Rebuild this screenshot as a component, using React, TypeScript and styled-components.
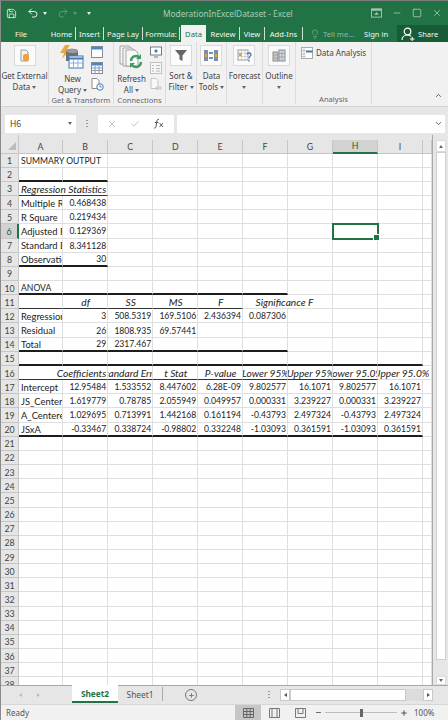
import styled, { createGlobalStyle } from "styled-components"
import { ChevronDown, ChevronUp, Lightbulb, Minus, Plus, Redo2, Save, Square, Undo2, X, Check } from "lucide-react"
import { Fragment } from "react"

type Content = { text: string, align?: "left" | "right" | "center", italic?: boolean, span?: number, shift?: number }

const colNames = ["A", "B", "C", "D", "E", "F", "G", "H", "I", ""]
const colWidths = [44, 45.3, 45, 45, 44.7, 45, 45, 45, 45, 9]

const num = (text: string): Content => ({ text, align: "right" })
const head = (text: string, extra?: Partial<Content>): Content => ({ text, align: "center", italic: true, ...extra })
const line = (...values: string[]) => values.map((v, i) => (i === 0 ? { text: v } : num(v)))

const sheet: Record<number, (Content | null)[]> = {
    1: [{ text: "SUMMARY OUTPUT", span: 2 }],
    3: [head("Regression Statistics", { span: 2 })],
    4: line("Multiple R", "0.468438"),
    5: line("R Square", "0.219434"),
    6: line("Adjusted R Square", "0.129369"),
    7: line("Standard Error", "8.341128"),
    8: line("Observations", "30"),
    10: [{ text: "ANOVA" }],
    11: [null, head("df"), head("SS"), head("MS"), head("F"), head("Significance F", { span: 2, shift: -7 })],
    12: line("Regression", "3", "508.5319", "169.5106", "2.436394", "0.087306"),
    13: line("Residual", "26", "1808.935", "69.57441"),
    14: line("Total", "29", "2317.467"),
    16: [{ text: "Coefficients", align: "right", italic: true, span: 2 }, null, head("Standard Error"), head("t Stat"), head("P-value"), head("Lower 95%"), head("Upper 95%"), head("Lower 95.0%"), head("Upper 95.0%", { span: 2, shift: -7 })],
    17: line("Intercept", "12.95484", "1.533552", "8.447602", "6.28E-09", "9.802577", "16.1071", "9.802577", "16.1071"),
    18: line("JS_Centered", "1.619779", "0.78785", "2.055949", "0.049957", "0.000331", "3.239227", "0.000331", "3.239227"),
    19: line("A_Centered", "1.029695", "0.713991", "1.442168", "0.161194", "-0.43793", "2.497324", "-0.43793", "2.497324"),
    20: line("JSxA", "-0.33467", "0.338724", "-0.98802", "0.332248", "-1.03093", "0.361591", "-1.03093", "0.361591"),
}

// black rules under a row: [last column index, weight]
const rules: Record<number, [number, "thick" | "thin"]> = {
    2: [1, "thick"],
    3: [1, "thin"],
    8: [1, "thick"],
    10: [5, "thick"],
    11: [5, "thin"],
    14: [5, "thick"],
    15: [8, "thick"],
    16: [8, "thin"],
    20: [8, "thick"],
}

const tabs: [string, number][] = [["Home", 28], ["Insert", 28], ["Page Lay", 39], ["Formula:", 37]]
const tabsAfter: [string, number][] = [["Review", 33], ["View", 25], ["Add-Ins", 38]]

const FileIcon = () => (
    <svg width="22" height="21" viewBox="0 0 22 21">
        <rect x="0.5" y="0.5" width="21" height="20" fill="#fbfbfb" stroke="#dadada" />
        <path d="M7 5h5l2 2v9H7z" fill="#f4f4f4" stroke="#9a9a9a" />
        <rect x="9" y="9" width="6" height="7" rx="2" fill="#e8a33c" />
    </svg>
)

const QueryIcon = () => (
    <svg width="24" height="24" viewBox="0 0 24 24">
        <path d="M5 0h5L6 6h3l-7 8 2-6H0z" fill="#eda83a" />
        <path d="M6 6c0-3 12-3 12 0v10H6z" fill="#6f7275" />
        <ellipse cx="12" cy="6" rx="6" ry="2" fill="#9a9c9e" />
        <rect x="9" y="11" width="14" height="12" fill="#fff" stroke="#3f78b5" />
        <path d="M9 12.5h14v2H9z" fill="#3f78b5" />
        <path d="M13.5 14v9M18 14v9M9 18h14" stroke="#8fb0d3" />
    </svg>
)

const SmallTable = ({ filled }: { filled?: boolean }) => (
    <svg width="12" height="12" viewBox="0 0 12 12">
        <rect x="0.5" y="0.5" width="11" height="11" fill="#fff" stroke="#7a8da3" />
        <rect x="1" y="1" width="10" height="2.5" fill="#4a86c5" />
        {filled && <path d="M1 6h10M1 8.5h10M4 3.5v8M8 3.5v8" stroke="#8a9aae" />}
    </svg>
)

const ClockPage = () => (
    <svg width="13" height="13" viewBox="0 0 13 13">
        <path d="M1 .5h5l2 2v8H1z" fill="#fff" stroke="#8b8b8b" />
        <circle cx="9" cy="9" r="3.2" fill="#fff" stroke="#3f78b5" />
        <path d="M9 7.3V9h1.5" stroke="#3f78b5" fill="none" />
    </svg>
)

const RefreshIcon = () => (
    <svg width="24" height="24" viewBox="0 0 24 24">
        <path d="M1 1h9l3 3v15H1z" fill="#f6f6f6" stroke="#a3a3a3" />
        <path d="M4 3h9l3 3v15H4z" fill="#f6f6f6" stroke="#a3a3a3" />
        <path d="M7 5h9l3 3v13H7z" fill="#fbfbfb" stroke="#a3a3a3" />
        <path d="M12 16a5 5 0 0 1 8.500-3.500M22 17a5 5 0 0 1-8.500 3.500" fill="none" stroke="#3f9b62" strokeWidth="2.400" />
        <path d="M22 9v5h-5zM11 23v-5h5z" fill="#3f9b62" />
    </svg>
)

const Monitor = () => (
    <svg width="12" height="12" viewBox="0 0 12 12">
        <rect x="0.5" y="1" width="11" height="8" fill="#fff" stroke="#7a7a7a" />
        <path d="M4 5l2-2 2 2-2 2z" fill="#3f86c5" />
        <path d="M4 11h4" stroke="#7a7a7a" />
    </svg>
)

const PropsIcon = () => (
    <svg width="12" height="12" viewBox="0 0 12 12">
        <rect x="0.5" y="0.5" width="11" height="11" fill="#f6f6f6" stroke="#c0c0c0" />
        <path d="M2 3.500h2M2 6.500h2M2 9h2M6 3.500h4M6 6.500h4M6 9h4" stroke="#b8b8b8" />
    </svg>
)

const LinkPage = () => (
    <svg width="12" height="12" viewBox="0 0 12 12">
        <path d="M1 .5h5l2 2v8H1z" fill="#f8f8f8" stroke="#c4c4c4" />
        <path d="M6 9h5v2H6z" fill="none" stroke="#c4c4c4" />
    </svg>
)

const FunnelIcon = () => (
    <svg width="22" height="21" viewBox="0 0 22 21">
        <rect x="0.5" y="0.5" width="21" height="20" fill="#fbfbfb" stroke="#dadada" />
        <path d="M5 5h12l-4.500 5.500V16l-3-1.500v-4z" fill="#666" />
    </svg>
)

const ToolsIcon = () => (
    <svg width="22" height="21" viewBox="0 0 22 21">
        <rect x="0.5" y="0.5" width="21" height="20" fill="#fbfbfb" stroke="#dadada" />
        <rect x="4" y="5" width="4" height="11" fill="#7d8fa3" />
        <rect x="14" y="5" width="4" height="11" fill="#7d8fa3" />
        <path d="M9 8h4M9 13h4" stroke="#3f78b5" strokeWidth="1.500" />
        <rect x="5" y="9" width="2" height="3" fill="#e8a33c" />
        <rect x="15" y="9" width="2" height="3" fill="#e8a33c" />
    </svg>
)

const ForecastIcon = () => (
    <svg width="22" height="21" viewBox="0 0 22 21">
        <rect x="0.5" y="0.5" width="21" height="20" fill="#fbfbfb" stroke="#dadada" />
        <rect x="5" y="5" width="10" height="10" fill="#fff" stroke="#9a9a9a" />
        <rect x="6" y="8" width="3" height="3" fill="#e59a52" />
        <path d="M8.500 5v10M12 5v10M5 8h10M5 11.500h10" stroke="#b5b5b5" strokeWidth="0.600" />
        <path d="M14 9.500c0-2 4-2 4 0 0 2-2 1.800-2 4M16 15v1.500" fill="none" stroke="#3f78b5" strokeWidth="1.300" />
    </svg>
)

const OutlineIcon = () => (
    <svg width="22" height="21" viewBox="0 0 22 21">
        <rect x="0.5" y="0.5" width="21" height="20" fill="#fbfbfb" stroke="#dadada" />
        <rect x="5" y="7" width="5" height="9" fill="#c6c6c6" stroke="#8d8d8d" />
        <rect x="11" y="5" width="6" height="11" fill="#cfdbe8" stroke="#8d8d8d" />
        <path d="M11 8.500h6M11 12h6M14 5v11M5 10h5M5 13h5" stroke="#8d8d8d" strokeWidth="0.600" />
    </svg>
)

const AnalysisIcon = () => (
    <svg width="12" height="12" viewBox="0 0 12 12">
        <rect x="0.500" y="0.500" width="11" height="11" fill="#fff" stroke="#a9a9a9" />
        <rect x="5" y="3.500" width="6.500" height="2" fill="#3f78b5" />
        <path d="M.5 3.500h5M3 .5v11M.5 7h4M.5 9.500h4" stroke="#c2c2c2" />
    </svg>
)

const FxIcon = () => (
    <svg width="12" height="11" viewBox="0 0 12 11">
        <path d="M6 1.500C4.500 1 4 2 3.700 4L3 8.500C2.800 10 2 10.300 1 10M1.800 4.500h3.500" fill="none" stroke="#555" />
        <path d="M6.500 5l3.500 4M10 5L6.500 9" stroke="#555" />
    </svg>
)

const ShareIcon = () => (
    <svg width="14" height="14" viewBox="0 0 14 14">
        <circle cx="6.500" cy="4.500" r="3.300" fill="none" stroke="#fff" strokeWidth="1.200" />
        <path d="M1 13c0-3 2.500-5 5.500-5 1.500 0 2.500.5 3.500 1.300" fill="none" stroke="#fff" strokeWidth="1.200" />
        <path d="M9 12h4.500M11.200 9.800v4.200" stroke="#fff" />
    </svg>
)

const BoxUpIcon = () => (
    <svg width="11" height="10" viewBox="0 0 12 10">
        <rect x="0.500" y="0.500" width="11" height="9" fill="none" stroke="#a9c7b5" />
        <rect x="0.500" y="0.500" width="11" height="2" fill="#a9c7b5" />
        <path d="M6 4l2.500 3h-5z" fill="#a9c7b5" />
    </svg>
)

const GridView = () => (
    <svg width="11" height="10" viewBox="0 0 11 10">
        <path d="M.5.500h10v9H.5zM.5 3.500h10M.5 6.500h10M3.800.500v9M7.200.500v9" fill="none" stroke="#666" />
    </svg>
)

const LayoutView = () => (
    <svg width="11" height="10" viewBox="0 0 11 10">
        <path d="M.5.500h10v9H.5zM3 .5v9M8 .5v9" fill="none" stroke="#777" />
    </svg>
)

const BreakView = () => (
    <svg width="11" height="10" viewBox="0 0 11 10">
        <path d="M.5.500h10v9H.5zM3 .5v5h5v-5" fill="none" stroke="#777" />
    </svg>
)

const renderRow = (row: number) => {
    const cells = []
    const values = sheet[row] || []
    const rule = rules[row]
    for (let c = 0; c < colNames.length; c++) {
        const v = values[c] || null
        const span = v?.span || 1
        const weight = rule && c + span - 1 <= rule[0] ? rule[1] : undefined
        cells.push(
            <Cell
                key={c}
                $span={span}
                $align={v?.align || "left"}
                $italic={v?.italic}
                $caps={v ? v.text === v.text.toUpperCase() : false}
                $rule={weight}
                $selected={row === 6 && c === 7}
            >
                {v && <CellText $shift={v.shift}>{v.text}</CellText>}
            </Cell>
        )
        c += span - 1
    }
    return (
        <Fragment key={row}>
            <RowHead $active={row === 6}>{row}</RowHead>
            {cells}
        </Fragment>
    )
}

const Grid = () => (
    <SheetGrid>
        <Corner />
        {colNames.map((name, i) => <ColHead key={i} $active={name === "H"}>{name}</ColHead>)}
        {Array.from({ length: 38 }, (_, r) => renderRow(r + 1))}
    </SheetGrid>
)

export default function App() {
    return (
        <Window>
            <Reset />
            <TitleBar>
                <QuickAccess>
                    <Save size={11} strokeWidth={1.6} />
                    <QatItem><Undo2 size={12} strokeWidth={1.8} /><Caret /></QatItem>
                    <QatItem $dim><Redo2 size={12} strokeWidth={1.8} /><Caret /></QatItem>
                    <Caret />
                </QuickAccess>
                <Title>ModerationInExcelDataset - Excel</Title>
                <WindowControls>
                    <BoxUpIcon />
                    <Minus size={10} />
                    <Square size={10} />
                    <X size={10} />
                </WindowControls>
            </TitleBar>
            <TabRow>
                <FileTab>File</FileTab>
                {tabs.map(([t, w]) => <Tab key={t} $w={w} $sep>{t}</Tab>)}
                <ActiveTab>Data</ActiveTab>
                {tabsAfter.map(([t, w]) => <Tab key={t} $w={w} $sep>{t}</Tab>)}
                <TellMe><Lightbulb size={10} strokeWidth={1.4} />Tell me...</TellMe>
                <SignIn>Sign in</SignIn>
                <ShareButton><ShareIcon />Share</ShareButton>
            </TabRow>
            <Ribbon>
                <Group $w={48}>
                    <GroupBody>
                        <BigButton><FileIcon /><BigLabel>Get External<br />Data <Drop /></BigLabel></BigButton>
                    </GroupBody>
                </Group>
                <Group $w={65}>
                    <GroupBody>
                        <BigButton><QueryIcon /><BigLabel>New<br />Query <Drop /></BigLabel></BigButton>
                        <SmallStack><SmallTable /><SmallTable filled /><ClockPage /></SmallStack>
                    </GroupBody>
                    <GroupLabel>Get &amp; Transform</GroupLabel>
                </Group>
                <Group $w={52}>
                    <GroupBody>
                        <BigButton><RefreshIcon /><BigLabel>Refresh<br />All <Drop /></BigLabel></BigButton>
                        <SmallStack><Monitor /><PropsIcon /><LinkPage /></SmallStack>
                    </GroupBody>
                    <GroupLabel>Connections</GroupLabel>
                </Group>
                <Group $w={31}>
                    <GroupBody><BigButton><FunnelIcon /><BigLabel>Sort &amp;<br />Filter <Drop /></BigLabel></BigButton></GroupBody>
                </Group>
                <Group $w={30}>
                    <GroupBody><BigButton><ToolsIcon /><BigLabel>Data<br />Tools <Drop /></BigLabel></BigButton></GroupBody>
                </Group>
                <Group $w={36}>
                    <GroupBody><BigButton><ForecastIcon /><BigLabel>Forecast<br /><Drop /></BigLabel></BigButton></GroupBody>
                </Group>
                <Group $w={33}>
                    <GroupBody><BigButton><OutlineIcon /><BigLabel>Outline<br /><Drop /></BigLabel></BigButton></GroupBody>
                </Group>
                <Group $w={76}>
                    <AnalysisBody><AnalysisIcon />Data Analysis</AnalysisBody>
                    <GroupLabel>Analysis</GroupLabel>
                </Group>
                <Collapse><ChevronUp size={9} strokeWidth={2.4} /></Collapse>
            </Ribbon>
            <FormulaBar>
                <NameBox>H6<Drop /></NameBox>
                <Grip />
                <FuncBox>
                    <X size={10} color="#b5b5b5" />
                    <Check size={10} color="#b5b5b5" />
                    <FxIcon />
                </FuncBox>
                <FormulaInput><ChevronDown size={9} color="#555" strokeWidth={2.4} /></FormulaInput>
            </FormulaBar>
            <SheetArea>
                <Grid />
                <VScroll>
                    <ScrollButton $h={12}><Caret $up $dark /></ScrollButton>
                    <VThumb />
                    <ScrollButton $h={9} $end><Caret $dark /></ScrollButton>
                </VScroll>
            </SheetArea>
            <SheetTabs>
                <TabArrows>
                    <ArrowLeft />
                    <ArrowRight />
                </TabArrows>
                <SheetTabActive>Sheet2</SheetTabActive>
                <SheetTab>Sheet1</SheetTab>
                <AddSheet><Plus size={7} strokeWidth={2.6} /></AddSheet>
                <TabGrip />
                <HScroll>
                    <HButton><ArrowLeft $dark /></HButton>
                    <HThumb />
                    <HButton><ArrowRight $dark /></HButton>
                </HScroll>
            </SheetTabs>
            <StatusBar>
                <Ready>Ready</Ready>
                <ViewButton $on><GridView /></ViewButton>
                <ViewButton><LayoutView /></ViewButton>
                <ViewButton><BreakView /></ViewButton>
                <Zoom>
                    <Minus size={7} strokeWidth={3} />
                    <SliderTrack><SliderThumb /></SliderTrack>
                    <Plus size={8} strokeWidth={3} />
                </Zoom>
                <Percent>100%</Percent>
            </StatusBar>
        </Window>
    )
}

const uiFont = `"Noto Sans", "Open Sans", sans-serif`
const green = "#217346"

const Reset = createGlobalStyle`
    html, body {
        margin: 0;
        padding: 0;
        background: #f1f1f1;
    }
    * {
        box-sizing: border-box;
    }
`

const Window = styled.div`
    width: 448px;
    height: 720px;
    display: flex;
    flex-direction: column;
    overflow: hidden;
    border-top: 1px solid #7b7b7b;
    border-left: 1px solid #8b8b8b;
    font-family: ${uiFont};
    background: #f1f1f1;
`

const TitleBar = styled.div`
    height: 24px;
    flex: none;
    display: flex;
    align-items: center;
    background: ${green};
    color: #fff;
`

const QuickAccess = styled.div`
    width: 162px;
    flex: none;
    display: flex;
    align-items: center;
    gap: 10px;
    padding-left: 5px;
`

const QatItem = styled.div<{ $dim?: boolean }>`
    display: flex;
    align-items: center;
    gap: 4px;
    opacity: ${props => props.$dim ? 0.3 : 1};
`

const Caret = styled.span<{ $up?: boolean, $dark?: boolean }>`
    display: inline-block;
    border-left: 2.5px solid transparent;
    border-right: 2.5px solid transparent;
    ${props => props.$up ? "border-bottom" : "border-top"}: 3px solid ${props => props.$dark ? "#666" : "#e6efe9"};
`

const Title = styled.div`
    flex: 1;
    font-size: 8.3px;
    color: #a9cdb8;
    white-space: nowrap;
`

const WindowControls = styled.div`
    display: flex;
    align-items: center;
    gap: 10px;
    padding-right: 6px;
    color: #a9c7b5;
`

const TabRow = styled.div`
    height: 17px;
    flex: none;
    display: flex;
    align-items: center;
    background: ${green};
    color: #f2f7f4;
    font-size: 7.6px;
    white-space: nowrap;
`

const FileTab = styled.div`
    width: 47px;
    padding-left: 14px;
`

const Tab = styled.div<{ $w: number, $sep?: boolean }>`
    width: ${props => props.$w}px;
    height: 13px;
    display: flex;
    align-items: center;
    justify-content: center;
    ${props => props.$sep && "border-right: 1px solid #cfe0d6;"}
`

const ActiveTab = styled.div`
    height: 17px;
    width: 25px;
    margin: 0 1px;
    display: flex;
    align-items: center;
    justify-content: center;
    background: #f1f1f1;
    color: ${green};
`

const TellMe = styled.div`
    display: flex;
    align-items: center;
    gap: 3px;
    margin-left: 7px;
    width: 54px;
    color: #8fbba2;
`

const SignIn = styled.div`
    width: 33px;
`

const ShareButton = styled.div`
    flex: 1;
    height: 17px;
    display: flex;
    align-items: center;
    gap: 3px;
    padding-left: 4px;
    background: #185c37;
`

const Ribbon = styled.div`
    height: 65px;
    flex: none;
    display: flex;
    background: #f1f1f1;
    border-bottom: 1px solid #d4d4d4;
    color: #444;
    position: relative;
`

const Group = styled.div<{ $w: number }>`
    width: ${props => props.$w}px;
    flex: none;
    display: flex;
    flex-direction: column;
    align-items: center;
    padding-top: 3px;
    border-right: 1px solid #dcdcdc;
    margin-bottom: 2px;
`

const GroupBody = styled.div`
    display: flex;
    align-items: flex-start;
    justify-content: center;
    gap: 4px;
    width: 100%;
    flex: 1;
`

const AnalysisBody = styled.div`
    display: flex;
    gap: 3px;
    width: 100%;
    flex: 1;
    align-self: flex-start;
    padding: 2px 0 0 5px;
    font-size: 8px;
    align-items: flex-start;
    white-space: nowrap;
`

const BigButton = styled.div`
    display: flex;
    flex-direction: column;
    align-items: center;
    gap: 2px;
`

const BigLabel = styled.div`
    font-size: 8px;
    line-height: 11px;
    text-align: center;
    white-space: nowrap;
    padding-top: 2px;
`

const Drop = styled.span`
    display: inline-block;
    vertical-align: middle;
    border-left: 2.5px solid transparent;
    border-right: 2.5px solid transparent;
    border-top: 3px solid #666;
`

const SmallStack = styled.div`
    display: flex;
    flex-direction: column;
    gap: 4px;
    padding-top: 1px;
`

const GroupLabel = styled.div`
    font-size: 7.6px;
    line-height: 10px;
    color: #666;
    white-space: nowrap;
`

const Collapse = styled.div`
    position: absolute;
    right: 5px;
    bottom: 1px;
    color: #555;
`

const FormulaBar = styled.div`
    height: 28px;
    flex: none;
    display: flex;
    align-items: center;
    padding: 5px 3px 0 4px;
    background: #e6e6e6;
`

const NameBox = styled.div`
    width: 71px;
    height: 18px;
    display: flex;
    align-items: center;
    justify-content: space-between;
    padding: 0 4px 0 5px;
    background: #fff;
    font-size: 8.5px;
    color: #444;
`

const Grip = styled.div`
    width: 2px;
    height: 8px;
    margin: 0 10px;
    flex: none;
    background: repeating-linear-gradient(to bottom, #9a9a9a 0 1px, transparent 1px 3px);
`

const TabGrip = styled(Grip)`
    align-self: center;
    margin-left: 71px;
`

const FuncBox = styled.div`
    width: 76px;
    height: 18px;
    display: flex;
    align-items: center;
    justify-content: space-around;
    padding: 0 3px;
    background: #fff;
    margin-right: 3px;
`

const FormulaInput = styled.div`
    flex: 1;
    height: 18px;
    display: flex;
    align-items: center;
    justify-content: flex-end;
    padding-right: 2px;
    background: #fff;
`

const SheetArea = styled.div`
    flex: 1;
    min-height: 0;
    display: flex;
    background: #e6e6e6;
`

const SheetGrid = styled.div`
    width: 432px;
    flex: none;
    height: 100%;
    display: grid;
    grid-template-columns: 18px ${colWidths.map(w => `${w}px`).join(" ")};
    grid-template-rows: 18.6px repeat(38, 14.17px);
    overflow: hidden;
    font-family: "Lato", "Carlito", sans-serif;
    color: #222;
    border-right: 1px solid #a9a9a9;
`

const Corner = styled.div`
    background: #e6e6e6;
    border-right: 1px solid #c6c6c6;
    border-bottom: 1px solid #c6c6c6;
    position: relative;
    &::after {
        content: "";
        position: absolute;
        right: 2px;
        bottom: 3px;
        border-left: 8px solid transparent;
        border-bottom: 8px solid #bcbcbc;
    }
`

const ColHead = styled.div<{ $active?: boolean }>`
    margin-top: 5px;
    display: flex;
    align-items: center;
    justify-content: center;
    background: ${props => props.$active ? "#d2d2d2" : "#e6e6e6"};
    border-right: 1px solid #c6c6c6;
    border-bottom: ${props => props.$active ? `2px solid ${green}` : "1px solid #c6c6c6"};
    color: ${props => props.$active ? "#1f5c3a" : "#444"};
    font-size: 8.8px;
`

const RowHead = styled.div<{ $active?: boolean }>`
    display: flex;
    align-items: center;
    justify-content: center;
    padding-top: 1px;
    background: ${props => props.$active ? "#d2d2d2" : "#e6e6e6"};
    border-right: ${props => props.$active ? `2px solid ${green}` : "1px solid #c6c6c6"};
    border-bottom: 1px solid #c6c6c6;
    color: ${props => props.$active ? "#1f5c3a" : "#444"};
    font-size: 8.8px;
`

const cellSize = (italic?: boolean, caps?: boolean) => italic ? "10.2px" : caps ? "8.6px" : "9.4px"

const Cell = styled.div<{ $span: number, $align: string, $italic?: boolean, $caps?: boolean, $rule?: "thick" | "thin", $selected?: boolean }>`
    grid-column: span ${props => props.$span};
    display: flex;
    align-items: center;
    justify-content: ${props => props.$align === "right" ? "flex-end" : props.$align === "center" ? "center" : "flex-start"};
    padding: 1px 1px 0 2px;
    overflow: ${props => props.$selected ? "visible" : "hidden"};
    white-space: nowrap;
    background: #fff;
    font-size: ${props => cellSize(props.$italic, props.$caps)};
    font-style: ${props => props.$italic ? "italic" : "normal"};
    border-right: 1px solid #dfdfdf;
    border-bottom: ${props => props.$rule === "thick" ? "2px solid #1d1d1d" : props.$rule === "thin" ? "1px solid #333" : "1px solid #dfdfdf"};
    ${props => props.$selected && `
        position: relative;
        outline: 2px solid ${green};
        outline-offset: -1px;
        &::after {
            content: "";
            position: absolute;
            right: -3px;
            bottom: -3px;
            width: 5px;
            height: 5px;
            background: ${green};
            border: 1px solid #fff;
        }
    `}
`

const CellText = styled.span<{ $shift?: number }>`
    flex: none;
    ${props => props.$shift !== undefined && `margin-left: ${props.$shift}px;`}
`

const VScroll = styled.div`
    flex: 1;
    display: flex;
    flex-direction: column;
    padding: 5px 2px 0 3px;
    background: #e6e6e6;
`

const ScrollButton = styled.div<{ $h: number, $end?: boolean }>`
    height: ${props => props.$h}px;
    flex: none;
    display: flex;
    align-items: center;
    justify-content: center;
    background: #fff;
    border: 1px solid #dadada;
    ${props => props.$end && "margin-top: auto;"}
`

const VThumb = styled.div`
    height: 508px;
    flex: none;
    background: #fff;
    border: 1px solid #cfcfcf;
`

const SheetTabs = styled.div`
    height: 19px;
    flex: none;
    display: flex;
    align-items: stretch;
    background: #e6e6e6;
    border-top: 1px solid #a9a9a9;
    font-size: 8.3px;
    color: #555;
`

const TabArrows = styled.div`
    width: 71px;
    display: flex;
    align-items: center;
    justify-content: center;
    gap: 15px;
    padding-right: 14px;
`

const ArrowLeft = styled.span<{ $dark?: boolean }>`
    display: inline-block;
    border-top: 2.5px solid transparent;
    border-bottom: 2.5px solid transparent;
    border-right: 3px solid ${props => props.$dark ? "#555" : "#bbb"};
`

const ArrowRight = styled.span<{ $dark?: boolean }>`
    display: inline-block;
    border-top: 2.5px solid transparent;
    border-bottom: 2.5px solid transparent;
    border-left: 3px solid ${props => props.$dark ? "#555" : "#bbb"};
`

const SheetTabActive = styled.div`
    width: 46px;
    margin-top: -1px;
    display: flex;
    align-items: center;
    justify-content: center;
    background: #fff;
    color: ${green};
    font-weight: 700;
    border-bottom: 2px solid ${green};
    margin-bottom: 1px;
`

const SheetTab = styled.div`
    width: 45px;
    display: flex;
    align-items: center;
    justify-content: center;
    margin: 1px 0 3px;
    border-right: 1px solid #a9a9a9;
`

const AddSheet = styled.div`
    width: 12px;
    height: 12px;
    margin: 3px 0 0 22px;
    flex: none;
    border: 1px solid #777;
    border-radius: 50%;
    display: flex;
    align-items: center;
    justify-content: center;
    color: #666;
`

const HScroll = styled.div`
    flex: none;
    width: 153px;
    margin-top: 3px;
    height: 12px;
    display: flex;
    background: #dcdcdc;
`

const HButton = styled.div`
    width: 10px;
    flex: none;
    display: flex;
    align-items: center;
    justify-content: center;
    background: #fff;
    border: 1px solid #c9c9c9;
    &:last-child {
        margin-left: auto;
    }
`

const HThumb = styled.div`
    width: 116px;
    background: #fff;
    border: 1px solid #c9c9c9;
`

const StatusBar = styled.div`
    height: 16px;
    flex: none;
    display: flex;
    align-items: center;
    background: #f1f1f1;
    border-top: 1px solid #d6d6d6;
    font-size: 8px;
    color: #555;
`

const Ready = styled.div`
    width: 234px;
    padding-left: 5px;
`

const ViewButton = styled.div<{ $on?: boolean }>`
    width: 26px;
    height: 15px;
    display: flex;
    align-items: center;
    justify-content: center;
    background: ${props => props.$on ? "#c6c6c6" : "transparent"};
`

const Zoom = styled.div`
    width: 96px;
    flex: none;
    display: flex;
    align-items: center;
    gap: 3px;
    margin-left: 2px;
`

const SliderTrack = styled.div`
    width: 72px;
    height: 1px;
    display: flex;
    align-items: center;
    justify-content: center;
    background: #bdbdbd;
`

const SliderThumb = styled.div`
    width: 3px;
    height: 8px;
    background: #666;
`

const Percent = styled.div`
    padding-left: 3px;
`
